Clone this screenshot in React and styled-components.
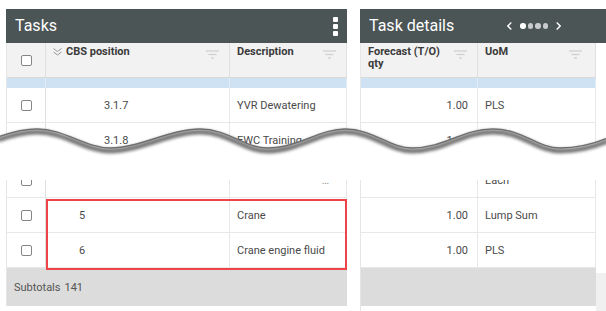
import React from "react";
import styled, { createGlobalStyle } from "styled-components";

const GlobalStyle = createGlobalStyle`
  html, body {
    margin: 0;
    padding: 0;
    background: #fff;
  }
  body {
    font-family: Roboto, "Liberation Sans", Arial, sans-serif;
  }
`;

const LEFT_COLS = "39px 184px 117px";
const RIGHT_COLS = "117px 118px";

// rows of the (torn) list
const rows = [
  { key: "a", level: 3, cbs: "3.1.7", desc: "YVR Dewatering", qty: "1.00", uom: "PLS" },
  { key: "b", level: 3, cbs: "3.1.8", desc: "EWC Training", qty: "1.00", uom: "Each" },
];
const tailRow = { key: "c", level: 1, cbs: "", desc: "\u2026", qty: "", uom: "Each" };
const marked = [
  { key: "d", level: 1, cbs: "5", desc: "Crane", qty: "1.00", uom: "Lump Sum" },
  { key: "e", level: 1, cbs: "6", desc: "Crane engine fluid", qty: "1.00", uom: "PLS" },
];

const WAVE =
  "M-2 137 C 12 132, 24 129, 37 129 C 65 129, 85 148, 110 148 C 140 148, 170 129, 200 129 " +
  "C 228 129, 245 148, 267 148 C 298 148, 320 129, 345 129 C 373 129, 390 148, 412 148 " +
  "C 445 148, 462 129, 493 129 C 523 129, 537 148, 560 148 C 580 148, 596 143, 608 138";

const Page = styled.div`
  position: relative;
  width: 606px;
  height: 311px;
  overflow: hidden;
  box-sizing: border-box;
  padding: 9px 0 0 6px;
  display: flex;
  gap: 13px;
`;

const Panel = styled.section`
  width: ${(p) => p.$width}px;
  flex-shrink: 0;
  display: flex;
  flex-direction: column;
`;

const PanelHeader = styled.header`
  height: 34px;
  background: #4b5556;
  color: #fff;
  display: flex;
  align-items: center;
  padding: 0 9px;
  font-size: 16px;
`;

const Title = styled.span`
  line-height: 1;
`;

const Kebab = styled.span`
  margin-left: auto;
  display: flex;
  flex-direction: column;
  gap: 2px;
  span {
    width: 5px;
    height: 5px;
    border-radius: 1px;
    background: #fff;
  }
`;

const Pager = styled.div`
  margin-left: 53px;
  display: flex;
  align-items: center;
  gap: 8px;
`;

const Dots = styled.div`
  display: flex;
  gap: 2px;
`;

const Dot = styled.span`
  width: 5.5px;
  height: 5.5px;
  border-radius: 50%;
  background: ${(p) => (p.$active ? "#ffffff" : "#c9cccd")};
`;

const Body = styled.div`
  display: flex;
  flex: 1;
`;

const Table = styled.div`
  display: flex;
  flex-direction: column;
  border-left: 1px solid #e6e6e6;
  ${(p) => p.$w && `width: ${p.$w}px;`}
`;

const Row = styled.div`
  display: grid;
  grid-template-columns: ${(p) => p.$cols};
  height: ${(p) => p.$h || 35}px;
  box-sizing: border-box;
  border-bottom: 1px solid #e8e8e8;
  background: #fff;
`;

const HeadRow = styled(Row)`
  background: #f2f2f2;
  border-bottom-color: #d9d9d9;
`;

const SelectedRow = styled(Row)`
  background: #cfe2f3;
  border-bottom: none;
  & > div {
    border-right-color: #e2ecf6;
  }
`;

const Gap = styled.div`
  height: 5px;
`;

const Cell = styled.div`
  display: flex;
  align-items: center;
  justify-content: ${(p) =>
    p.$align === "right" ? "flex-end" : p.$align === "center" ? "center" : "flex-start"};
  padding: 0 ${(p) => p.$pr ?? 8}px 0 ${(p) => p.$pl ?? 7}px;
  border-right: 1px solid #e8e8e8;
  font-size: 11px;
  color: ${(p) => (p.$muted ? "#9a9a9a" : "#4a4a4a")};
  white-space: nowrap;
  overflow: hidden;
`;

const HeadCell = styled.div`
  display: flex;
  justify-content: space-between;
  align-items: flex-start;
  padding: 3px ${(p) => p.$pr ?? 10}px 0 7px;
  border-right: 1px solid #e0e0e0;
  font-size: 11px;
  font-weight: 700;
  line-height: 12px;
  color: #3a3a3a;
`;

const HeadLabel = styled.span`
  display: flex;
  align-items: flex-start;
  gap: 4px;
`;

const CheckCell = styled.div`
  display: flex;
  align-items: center;
  justify-content: center;
  border-right: 1px solid #e0e0e0;
`;

const Checkbox = styled.span`
  width: 11px;
  height: 11px;
  box-sizing: border-box;
  border: 1px solid #858585;
  border-radius: 2px;
  background: #fff;
`;

const Highlight = styled.div`
  position: relative;
  &::after {
    content: "";
    position: absolute;
    left: 39px;
    right: 0;
    top: 1px;
    bottom: -2px;
    border: 2px solid #ee4349;
    z-index: 2;
    pointer-events: none;
  }
`;

const Subtotal = styled.div`
  height: 38px;
  background: #dcdcdc;
  display: flex;
  align-items: center;
  gap: 4px;
  padding-left: 7px;
  font-size: 11px;
  color: #555;
`;

const Strip = styled.div`
  width: 11px;
  display: flex;
  flex-direction: column;
  justify-content: flex-end;
  span {
    height: 38px;
    background: #f0f0f0;
  }
`;

const TearLayer = styled.svg`
  position: absolute;
  left: 0;
  top: 0;
  z-index: 3;
  pointer-events: none;
`;

const FilterIcon = () => (
  <svg width="13" height="9" viewBox="0 0 13 9" style={{ marginTop: 4 }}>
    <g stroke="#cfcfcf" strokeWidth="1.3">
      <line x1="0" y1="1" x2="13" y2="1" />
      <line x1="2.5" y1="4.5" x2="10.5" y2="4.5" />
      <line x1="5" y1="8" x2="8" y2="8" />
    </g>
  </svg>
);

const Chevrons = () => (
  <svg width="9" height="8" viewBox="0 0 9 8" style={{ marginTop: 2 }}>
    <g fill="none" stroke="#8c8c8c" strokeWidth="0.9">
      <polyline points="0.5,0.5 4.5,3.5 8.5,0.5" />
      <polyline points="0.5,4 4.5,7 8.5,4" />
    </g>
  </svg>
);

const Arrow = ({ dir }) => (
  <svg width="5" height="8" viewBox="0 0 5 8">
    <polyline
      points={dir === "left" ? "4.3,0.5 0.8,4 4.3,7.5" : "0.7,0.5 4.2,4 0.7,7.5"}
      fill="none"
      stroke="#fff"
      strokeWidth="1.4"
    />
  </svg>
);

const Tear = () => (
  <TearLayer width="606" height="311" viewBox="0 0 606 311">
    <defs>
      <filter id="tearBlur" x="-5%" y="-100%" width="110%" height="300%">
        <feGaussianBlur stdDeviation="1.6" />
      </filter>
    </defs>
    <path d={`${WAVE} L608 180 L-2 180 Z`} fill="#fff" />
    <path
      d={WAVE}
      fill="none"
      stroke="#555"
      strokeWidth="5"
      opacity="0.8"
      filter="url(#tearBlur)"
      transform="translate(0 3)"
    />
    <path d={WAVE} fill="none" stroke="#6e6e6e" strokeWidth="1.4" />
  </TearLayer>
);

const LeftRow = ({ r }) => (
  <Row $cols={LEFT_COLS}>
    <CheckCell>
      <Checkbox />
    </CheckCell>
    <Cell $pl={r.level === 3 ? 58 : 33}>{r.cbs}</Cell>
    <Cell $muted={r.desc === "\u2026"} $align={r.desc === "\u2026" ? "right" : "left"} $pr={17}>
      {r.desc}
    </Cell>
  </Row>
);

const RightRow = ({ r }) => (
  <Row $cols={RIGHT_COLS}>
    <Cell $align="right" $pr={9}>
      {r.qty}
    </Cell>
    <Cell>{r.uom}</Cell>
  </Row>
);

export default function App() {
  return (
    <>
      <GlobalStyle />
      <Page>
        <Panel $width={341}>
          <PanelHeader>
            <Title>Tasks</Title>
            <Kebab>
              <span />
              <span />
              <span />
            </Kebab>
          </PanelHeader>
          <Table>
            <HeadRow $cols={LEFT_COLS}>
              <CheckCell>
                <Checkbox />
              </CheckCell>
              <HeadCell>
                <HeadLabel>
                  <Chevrons />
                  CBS position
                </HeadLabel>
                <FilterIcon />
              </HeadCell>
              <HeadCell>
                Description
                <FilterIcon />
              </HeadCell>
            </HeadRow>
            <SelectedRow $cols={LEFT_COLS} $h={10}>
              <Cell />
              <Cell />
              <Cell />
            </SelectedRow>
            {rows.map((r) => (
              <LeftRow key={r.key} r={r} />
            ))}
            <Gap />
            <LeftRow r={tailRow} />
            <Highlight>
              {marked.map((r) => (
                <LeftRow key={r.key} r={r} />
              ))}
            </Highlight>
            <Subtotal>
              <span>Subtotals</span>
              <span>141</span>
            </Subtotal>
          </Table>
        </Panel>

        <Panel $width={246}>
          <PanelHeader>
            <Title>Task details</Title>
            <Pager>
              <Arrow dir="left" />
              <Dots>
                <Dot $active />
                <Dot />
                <Dot />
                <Dot />
              </Dots>
              <Arrow dir="right" />
            </Pager>
          </PanelHeader>
          <Body>
            <Table $w={236}>
              <HeadRow $cols={RIGHT_COLS}>
                <HeadCell>
                  <span>
                    Forecast (T/O)
                    <br />
                    qty
                  </span>
                  <FilterIcon />
                </HeadCell>
                <HeadCell $pr={13}>
                  UoM
                  <FilterIcon />
                </HeadCell>
              </HeadRow>
              <SelectedRow $cols={RIGHT_COLS} $h={10}>
                <Cell />
                <Cell />
              </SelectedRow>
              {rows.map((r) => (
                <RightRow key={r.key} r={r} />
              ))}
              <Gap />
              <RightRow r={tailRow} />
              {marked.map((r) => (
                <RightRow key={r.key} r={r} />
              ))}
              <Subtotal />
            </Table>
            <Strip>
              <span />
            </Strip>
          </Body>
        </Panel>
        <Tear />
      </Page>
    </>
  );
}
